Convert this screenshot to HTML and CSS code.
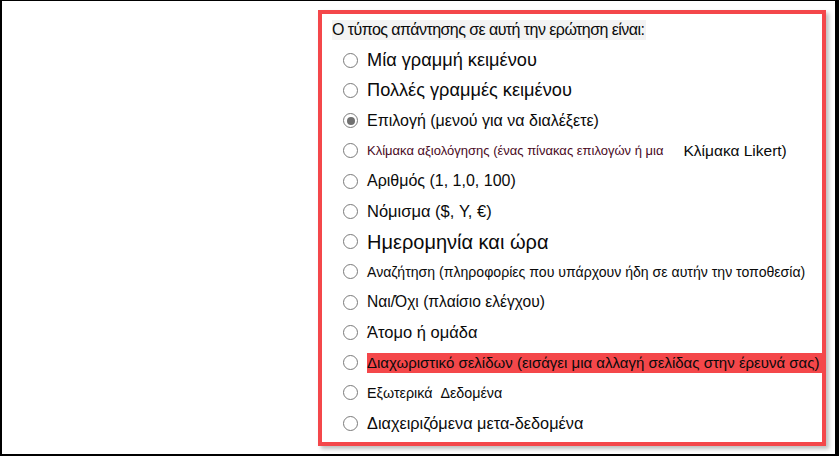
FILE: index.html
```html
<!DOCTYPE html>
<html lang="el">
<head>
    <meta charset="UTF-8">
    <title>Τύπος απάντησης</title>
    <link rel="stylesheet" href="styles.css">
</head>
<body>
    <div class="page">
        <div class="panel">
            <div class="question">Ο τύπος απάντησης σε αυτή την ερώτηση είναι:</div>
            <ul class="options">
                <li class="option"><span class="radio"></span><span class="label size-a">Μία γραμμή κειμένου</span></li>
                <li class="option"><span class="radio"></span><span class="label size-a">Πολλές γραμμές κειμένου</span></li>
                <li class="option"><span class="radio checked"></span><span class="label size-b">Επιλογή (μενού για να διαλέξετε)</span></li>
                <li class="option"><span class="radio"></span><span class="label small">Κλίμακα αξιολόγησης (ένας πίνακας επιλογών ή μια</span><span class="label likert">Κλίμακα Likert)</span></li>
                <li class="option"><span class="radio"></span><span class="label size-b">Αριθμός (1, 1,0, 100)</span></li>
                <li class="option"><span class="radio"></span><span class="label size-c">Νόμισμα ($, Y, €)</span></li>
                <li class="option"><span class="radio"></span><span class="label large">Ημερομηνία και ώρα</span></li>
                <li class="option"><span class="radio"></span><span class="label lookup">Αναζήτηση (πληροφορίες που υπάρχουν ήδη σε αυτήν την τοποθεσία)</span></li>
                <li class="option"><span class="radio"></span><span class="label size-d">Ναι/Όχι (πλαίσιο ελέγχου)</span></li>
                <li class="option"><span class="radio"></span><span class="label size-c">Άτομο ή ομάδα</span></li>
                <li class="option"><span class="radio"></span><span class="label marked">Διαχωριστικό σελίδων (εισάγει μια αλλαγή σελίδας στην έρευνά σας)</span></li>
                <li class="option"><span class="radio"></span><span class="label external">Εξωτερικά &nbsp;Δεδομένα</span></li>
                <li class="option"><span class="radio"></span><span class="label size-e">Διαχειριζόμενα μετα-δεδομένα</span></li>
            </ul>
        </div>
    </div>
</body>
</html>
```

FILE: styles.css
```css
:root {
    --red: #f4474a;
    --ring: #7a7a7a;
    --text: #0a0a0a;
}

* {
    margin: 0;
    padding: 0;
    box-sizing: border-box;
}

body {
    font-family: 'Liberation Sans', Arial, sans-serif;
    color: var(--text);
    background: #ffffff;
}

.page {
    width: 839px;
    height: 456px;
    background: #ffffff;
    border-top: 1px solid #000;
    border-left: 2px solid #000;
    border-right: 4px solid #000;
    border-bottom: 2px solid #000;
    padding: 9px 0 0 316px;
}

.panel {
    width: 508px;
    height: 436px;
    border: 4px solid var(--red);
    box-shadow: 3px 3px 4px rgba(0, 0, 0, 0.25);
    padding: 6px 0 0 10px;
}

.question {
    display: inline-block;
    height: 20px;
    line-height: 20px;
    font-size: 16px;
    letter-spacing: -0.56px;
    background: #f3f3f3;
    padding-right: 2px;
}

.options {
    list-style: none;
    margin-top: 5px;
    padding-left: 11px;
}

.option {
    display: flex;
    align-items: center;
    height: 30.25px;
}

.radio {
    flex: none;
    width: 15px;
    height: 15px;
    border: 1.5px solid var(--ring);
    border-radius: 50%;
    margin-right: 9px;
    display: flex;
    align-items: center;
    justify-content: center;
}

.radio.checked::after {
    content: "";
    width: 8px;
    height: 8px;
    border-radius: 50%;
    background: #707070;
}

.label {
    font-size: 15px;
    line-height: 20px;
    white-space: nowrap;
}

.size-a {
    font-size: 18.2px;
}

.size-b {
    font-size: 16px;
}

.size-c {
    font-size: 16.5px;
}

.size-d {
    font-size: 15.6px;
}

.size-e {
    font-size: 16.3px;
}

.small {
    font-size: 13px;
    color: #4a0a1e;
}

.likert {
    font-size: 15.5px;
    margin-left: 20px;
}

.large {
    font-size: 20px;
}

.lookup {
    font-size: 14.1px;
}

.marked {
    background: var(--red);
    padding-right: 4px;
}

.external {
    font-size: 14.3px;
}
```
